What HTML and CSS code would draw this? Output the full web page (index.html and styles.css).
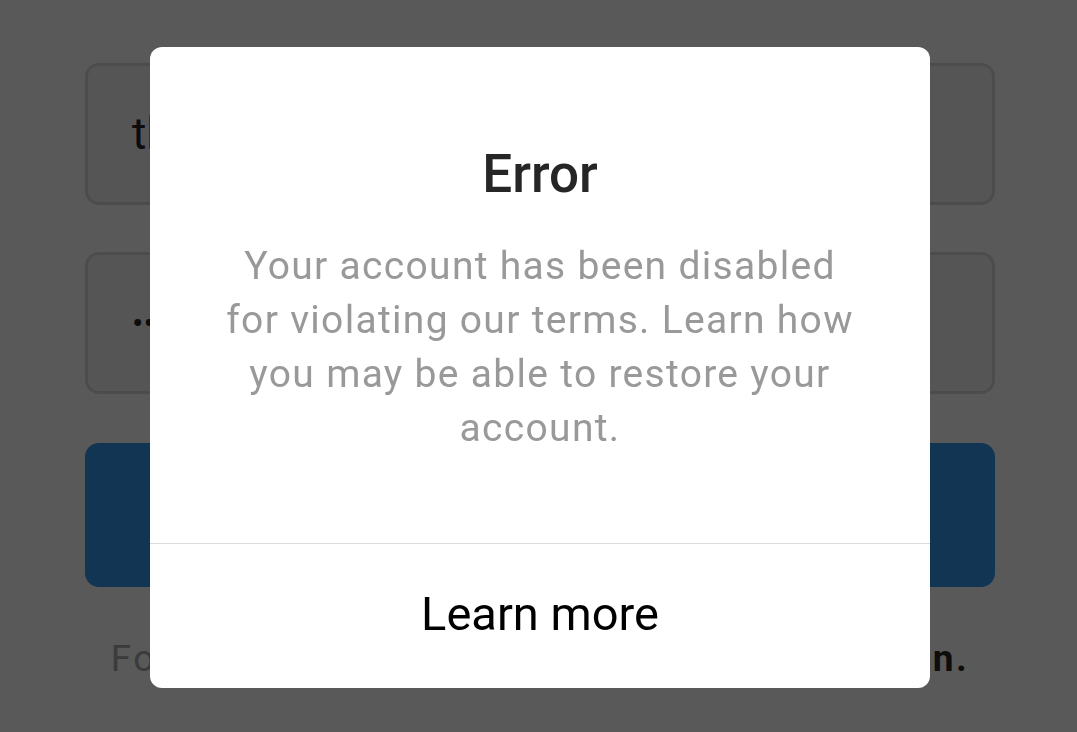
FILE: index.html
```html
<!DOCTYPE html>
<html>
<head>
    <title>Login</title>
    <meta charset="UTF-8">
    <link rel="stylesheet" href="styles.css">
</head>
<body>
    <div class="login">
        <div class="field"><span class="field-text">thebestaccount</span></div>
        <div class="field"><span class="field-text dots">&#8226;&#8226;&#8226;&#8226;&#8226;&#8226;&#8226;&#8226;&#8226;</span></div>
        <div class="login-button">Log in</div>
        <p class="help">Forgot your login details? <b>Get help logging in.</b></p>
    </div>

    <div class="overlay"></div>

    <div class="dialog">
        <div class="dialog-body">
            <h2 class="dialog-title">Error</h2>
            <p class="dialog-text">Your account has been disabled for violating our terms. Learn how you may be able to restore your account.</p>
        </div>
        <div class="dialog-action">Learn more</div>
    </div>
</body>
</html>
```

FILE: styles.css
```css
body {
    margin: 0;
    width: 1077px;
    height: 732px;
    overflow: hidden;
    background: #fff;
    font-family: Roboto, "Noto Sans", sans-serif;
}
.login {
    display: flex;
    flex-direction: column;
    padding: 63px 82px 0 85px;
}
.field {
    height: 136px;
    border: 3px solid #dbdbdb;
    border-radius: 14px;
    background: #f4f4f4;
    display: flex;
    align-items: center;
    padding-left: 44px;
    margin-bottom: 47px;
}
.field-text {
    font-size: 44px;
    color: #262626;
}
.dots {
    font-size: 34px;
    letter-spacing: 0;
}
.login-button {
    height: 144px;
    margin-top: 2px;
    border-radius: 14px;
    background: #3897f0;
    color: #fff;
    font-size: 40px;
    font-weight: 500;
    display: flex;
    align-items: center;
    justify-content: center;
}
.help {
    margin: 50px -40px 0;
    text-align: center;
    white-space: nowrap;
    font-size: 37px;
    line-height: 44px;
    letter-spacing: 2.4px;
    color: #a8a8a8;
}
.help b {
    color: #262626;
}
.overlay {
    position: fixed;
    left: 0;
    top: 0;
    right: 0;
    bottom: 0;
    background: rgba(0, 0, 0, 0.65);
}
.dialog {
    position: absolute;
    left: 150px;
    top: 47px;
    width: 780px;
    height: 641px;
    background: #fff;
    border-radius: 12px;
    display: flex;
    flex-direction: column;
    overflow: hidden;
}
.dialog-body {
    height: 496px;
    padding: 95px 70px 0;
    box-sizing: border-box;
    text-align: center;
}
.dialog-title {
    margin: 0;
    font-size: 53px;
    line-height: 64px;
    font-weight: 500;
    color: #262626;
}
.dialog-text {
    margin: 33px 0 0;
    font-size: 39px;
    line-height: 54px;
    letter-spacing: 1.3px;
    color: #999;
}
.dialog-action {
    flex: 1;
    border-top: 1px solid #dbdbdb;
    padding-bottom: 5px;
    display: flex;
    align-items: center;
    justify-content: center;
    font-size: 47px;
    color: #000;
}
```
